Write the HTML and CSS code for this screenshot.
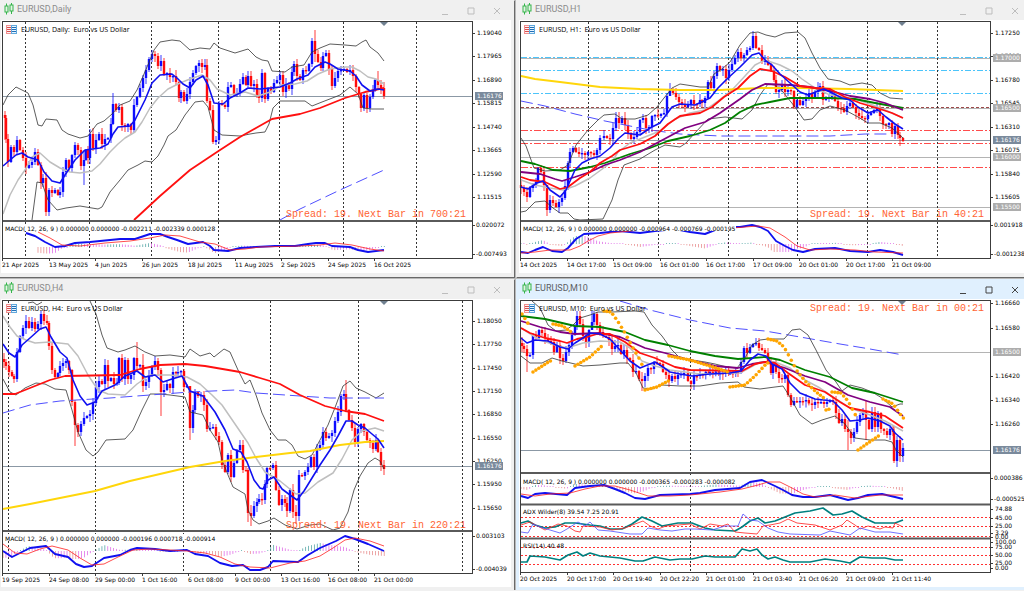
FILE: index.html
```html
<!DOCTYPE html>
<html lang="en">
<head>
    <meta charset="utf-8">
    <title>EURUSD charts</title>
    <meta name="viewport" content="width=device-width, initial-scale=1">
    <link rel="stylesheet" href="styles.css">
</head>
<body>
    <main class="workspace">
        <section class="window">
            <header class="titlebar">
                <svg class="candleIcon" viewBox="0 0 10 12"><path d="M2.5 0.5v11M7.5 0v11"/><rect x="1" y="3" width="3" height="6"/><rect x="6" y="2" width="3" height="6"/></svg>
                <h2>EURUSD,Daily</h2>
                <div class="controls">
                    <button aria-label="Minimize"><svg viewBox="0 0 8 8"><path d="M1 7.5h6"/></svg></button>
                    <button aria-label="Maximize"><svg viewBox="0 0 8 8"><path d="M1 1h6v6h-6z"/></svg></button>
                    <button aria-label="Close"><svg viewBox="0 0 8 8"><path d="M1 1l6 6M7 1l-6 6"/></svg></button>
                </div>
            </header>
            <svg class="chart" id="daily" viewBox="1 20 510 253"></svg>
        </section>

        <section class="window">
            <header class="titlebar">
                <svg class="candleIcon" viewBox="0 0 10 12"><path d="M2.5 0.5v11M7.5 0v11"/><rect x="1" y="3" width="3" height="6"/><rect x="6" y="2" width="3" height="6"/></svg>
                <h2>EURUSD,H1</h2>
                <div class="controls">
                    <button aria-label="Minimize"><svg viewBox="0 0 8 8"><path d="M1 7.5h6"/></svg></button>
                    <button aria-label="Maximize"><svg viewBox="0 0 8 8"><path d="M1 1h6v6h-6z"/></svg></button>
                    <button aria-label="Close"><svg viewBox="0 0 8 8"><path d="M1 1l6 6M7 1l-6 6"/></svg></button>
                </div>
            </header>
            <svg class="chart" id="h1" viewBox="519 20 510 253"></svg>
        </section>

        <section class="window">
            <header class="titlebar">
                <svg class="candleIcon" viewBox="0 0 10 12"><path d="M2.5 0.5v11M7.5 0v11"/><rect x="1" y="3" width="3" height="6"/><rect x="6" y="2" width="3" height="6"/></svg>
                <h2>EURUSD,H4</h2>
                <div class="controls">
                    <button aria-label="Minimize"><svg viewBox="0 0 8 8"><path d="M1 7.5h6"/></svg></button>
                    <button aria-label="Maximize"><svg viewBox="0 0 8 8"><path d="M1 1h6v6h-6z"/></svg></button>
                    <button aria-label="Close"><svg viewBox="0 0 8 8"><path d="M1 1l6 6M7 1l-6 6"/></svg></button>
                </div>
            </header>
            <svg class="chart" id="h4" viewBox="1 299 510 288"></svg>
        </section>

        <section class="window active">
            <header class="titlebar">
                <svg class="candleIcon" viewBox="0 0 10 12"><path d="M2.5 0.5v11M7.5 0v11"/><rect x="1" y="3" width="3" height="6"/><rect x="6" y="2" width="3" height="6"/></svg>
                <h2>EURUSD,M10</h2>
                <div class="controls">
                    <button aria-label="Minimize"><svg viewBox="0 0 8 8"><path d="M1 7.5h6"/></svg></button>
                    <button aria-label="Maximize"><svg viewBox="0 0 8 8"><path d="M1 1h6v6h-6z"/></svg></button>
                    <button aria-label="Close"><svg viewBox="0 0 8 8"><path d="M1 1l6 6M7 1l-6 6"/></svg></button>
                </div>
            </header>
            <svg class="chart" id="m10" viewBox="519 299 510 288"></svg>
        </section>
    </main>

    <script src="charts.js"></script>
</body>
</html>
```

FILE: styles.css
```css
body {
    margin: 0;
    overflow: hidden;
    background: #f0f0f0;
    font-family: "Open Sans", sans-serif;
}
/* the windows run a little past the edges of the desktop */
.workspace {
    display: grid;
    grid-template-columns: 1fr 1fr;
    gap: 2px;
    margin: 0 -8px 0 -2px;
    background: #b8b8b8;
}
.window {
    padding: 0 3px 4px;
    background: #f0f0f0;
    box-shadow: 1px 1px 0 #696969;
}
.window:nth-child(n+3) {
    padding-bottom: 3px;
}
.window.active {
    background: #e0f0fe;
}
.titlebar {
    display: flex;
    align-items: center;
    height: 20px;
    padding-left: 3px;
}
.titlebar h2 {
    flex: 1;
    margin: 0 0 2px 3px;
    font-size: 9px;
    line-height: 14px;
    font-weight: 400;
    font-family: "Roboto", sans-serif;
    color: #8c8c8c;
}
.active .titlebar h2 {
    color: #5c6064;
}
.candleIcon {
    width: 10px;
    height: 12px;
    margin-bottom: 2px;
    fill: #e4f4e4;
    stroke: #34b44a;
    stroke-width: 1;
}
.controls {
    display: flex;
    margin-right: 1px;
}
.controls button {
    width: 26px;
    height: 20px;
    padding: 1px 0 0;
    border: 0;
    background: none;
    line-height: 0;
}
.controls svg {
    width: 8px;
    height: 8px;
    fill: none;
    stroke: #bdbdbd;
}
.active .controls svg {
    stroke: #444;
}

.chart {
    display: block;
    width: 100%;
    height: auto;
    background: white;
}
.chart text {
    font-family: "DejaVu Sans", sans-serif;
    font-size: 6px;
    fill: #000;
    white-space: pre;
}
.chart text.symbol {
    font-family: "Open Sans", sans-serif;
    font-size: 7px;
}
.chart text.spread {
    font-family: "Liberation Mono", monospace;
    font-size: 10px;
    fill: #ff6433;
    text-anchor: end;
}
.chart text.onTag {
    fill: white;
}
.chart polyline {
    fill: none;
    stroke-linejoin: round;
}
.frame {
    fill: none;
    stroke: #3c3c3c;
    shape-rendering: crispEdges;
}
.splitter {
    stroke: #5a5a5a;
    stroke-width: 2;
}
.grid {
    stroke: #333;
    stroke-dasharray: 2 2;
}
.tick {
    stroke: #3c3c3c;
}
.price, .level { stroke: #8b98a5; }
.level { stroke: #b4b4b4; }
.tag { fill: #adadad; }
.tag.current { fill: #7a8a9c; }
.marker { fill: #708090; }
.cyan { stroke: #4cc4fa; stroke-dasharray: 6 2 2 2; }
.redDash { stroke: #ff4c4c; stroke-dasharray: 7 2 2 2; }
.maroon { stroke: #9c4848; stroke-dasharray: 3 2; }
.osc { stroke: #ff3030; stroke-dasharray: 2 2; }

.up { fill: #0c0cff; }
.down { fill: #ff0c0c; }
.band { stroke: #333; stroke-width: 0.8; }
.mid { stroke: #bfbfbf; stroke-width: 1.5; }
.fast { stroke: #1010f0; stroke-width: 1.6; }
.slow { stroke: #ff1010; stroke-width: 1.8; }
.purple { stroke: #800080; stroke-width: 1.8; }
.green { stroke: #008000; stroke-width: 1.8; }
.gold { stroke: #ffd60a; stroke-width: 1.9; }
.far { stroke: #5050ff; stroke-width: 1; stroke-dasharray: 12 5; }
.macd { stroke: #1010f0; stroke-width: 1.9; }
.signal { stroke: #ff2020; stroke-width: 0.8; }
.thinBlue { stroke: #5050ff; stroke-width: 0.8; }
.teal { stroke: #008080; stroke-width: 1.7; }
.sar { fill: #ffa500; }
.textBack { fill: white; }
```

FILE: charts.js
```js
// points are "x,y x,y ..." in the units of each chart's viewBox
const charts = [
{
    id: "daily", left: 3, top: 22, bottom: 220, last: 384,
    title: "EURUSD, Daily:  Euro vs US Dollar",
    spread: ["Spread: 19. Next Bar in 700:21", 217],
    prices: [["1.19040",33],["1.17965",56],["1.16890",80],["1.15815",103],["1.14740",127],["1.13665",150],["1.12590",174],["1.11515",197]],
    current: 96,
    grid: [25,89,151,218,279,343,416],
    times: ["21 Apr 2025","13 May 2025","4 Jun 2025","26 Jun 2025","18 Jul 2025","11 Aug 2025","2 Sep 2025","24 Sep 2025","16 Oct 2025"],
    closes: "5,118 6,139 8,162 11,147 14,152 17,140 20,150 23,158 26,168 29,165 32,162 35,152 38,165 41,183 43,178 46,212 49,190 52,193 55,190 58,195 60,192 63,172 66,160 69,168 72,155 75,145 78,150 81,166 84,160 86,150 88,158 90,134 93,148 96,140 99,134 102,144 105,139 108,138 111,124 113,104 116,110 119,107 122,125 125,127 128,124 131,130 134,105 137,97 140,88 143,78 146,70 149,59 152,54 155,56 158,66 161,61 164,75 167,73 170,77 173,76 176,82 179,98 181,92 184,101 187,94 190,82 193,73 196,66 199,63 202,67 205,65 207,101 210,110 213,142 216,140 219,103 222,105 225,107 228,87 231,85 234,95 237,93 240,84 243,77 246,85 248,76 251,86 254,84 257,96 259,98 262,73 265,99 268,88 271,92 274,83 277,80 280,75 283,92 286,84 289,89 292,72 294,64 297,76 300,80 303,70 306,71 309,64 312,41 315,54 318,62 321,68 323,56 326,53 329,69 332,86 335,78 338,71 341,70 344,69 347,72 350,70 353,76 356,87 359,94 361,108 364,95 367,108 370,97 373,91 375,80 378,85 381,88 384,96",
    wicks: [[315,30,62],[152,50,62],[46,172,216],[84,150,185],[213,105,144],[378,71,88],[113,93,125],[5,111,140]],
    lines: [
        ["band","3,105 8,95 16,87 22,90 28,93 33,105 38,125 42,126 46,119 57,120 62,130 68,134 80,138 88,136 97,124 104,121 112,114 120,105 130,101 137,90 144,74 150,60 154,50 160,42 172,40 180,41 190,50 200,48 210,49 214,43 220,48 235,53 248,49 256,57 262,60 268,61 272,71 285,72 292,67 304,65 312,52 320,48 330,44 345,45 356,46 362,42 366,40 370,47 378,53 384,61"],
        ["band","32,220 37,182 42,183 48,200 57,210 66,208 80,206 98,209 102,207 110,192 120,180 128,170 138,165 145,161 152,162 158,156 164,145 168,136 176,130 185,115 195,102 203,101 208,107 214,130 222,135 240,136 250,134 256,133 265,132 269,124 273,108 280,101 305,101 312,106 322,102 335,97 340,95 350,87 358,94 363,108 372,109 384,109"],
        ["mid","3,214 10,195 18,180 25,170 32,157 40,153 50,162 60,168 70,172 80,173 92,171 100,164 110,152 118,144 125,138 135,132 142,122 150,108 158,98 168,89 180,83 190,79 202,75 210,80 217,89 230,95 245,92 258,96 270,92 282,85 295,84 307,81 318,74 330,69 345,67 352,67 360,71 368,77 376,79 384,84"],
        ["far","280,220 300,209 340,190 384,170"],
        ["slow","134,220 160,196 190,170 217,152 240,137 256,128 272,119 300,114 320,108 345,98 365,92 384,88"],
        ["fast","3,166 10,160 16,155 22,153 28,157 38,160 44,172 52,181 60,183 65,175 75,160 85,150 100,148 108,144 113,134 118,127 130,126 135,120 145,100 152,83 160,75 172,74 177,78 183,84 190,88 196,80 203,76 208,85 214,103 223,104 230,98 240,93 248,88 260,89 270,88 280,87 290,83 297,79 308,75 315,67 325,62 330,64 338,69 350,71 356,76 362,85 370,91 378,89 384,90"]
    ],
    macd: {
        top: 222, bottom: 258, zero: 247, text: "MACD( 12, 26, 9 ) 0.000000 0.000000 -0.002211 -0.002339 0.000128",
        scale: [["0.020072",225],["-0.007493",254]],
        main: "26,233 35,236 45,242 55,247 65,246 75,243 90,242 110,240 120,239 135,239 150,234 160,234 168,237 177,240 188,244 203,242 210,246 214,250 228,251 240,248 256,247 275,246 295,246 308,244 316,243 325,243 332,246 350,247 358,250 368,252 384,250",
        signal: "38,232 50,238 62,245 80,246 105,243 130,241 150,238 165,235 180,236 200,242 215,244 230,250 245,249 260,247 300,246 320,245 335,243 352,245 370,249 384,251"
    }
},
{
    id: "h1", left: 521, top: 22, bottom: 220, last: 902,
    title: "EURUSD, H1:  Euro vs US Dollar",
    spread: ["Spread: 19. Next Bar in 40:21", 217],
    prices: [["1.17250",33],["1.17015",56],["1.16780",80],["1.16545",103],["1.16310",127],["1.16075",150],["1.15840",174],["1.15605",197]],
    tags: [["1.17000",58],["1.16500",108],["1.16000",157],["1.15500",207]],
    current: 140,
    grid: [588,658,728,797,867,937],
    levels: [["cyan",57],["cyan",70],["cyan",93],["maroon",107],["redDash",130],["redDash",143],["redDash",167]],
    times: ["14 Oct 2025","14 Oct 17:00","15 Oct 09:00","16 Oct 01:00","16 Oct 17:00","17 Oct 09:00","20 Oct 01:00","20 Oct 17:00","21 Oct 09:00"],
    closes: "521,188 524,192 527,197 530,188 533,185 536,182 538,168 541,172 544,185 547,210 550,200 553,203 556,207 559,202 562,198 565,186 568,163 570,152 573,148 576,152 579,154 582,153 585,155 588,152 591,153 594,155 597,150 600,138 604,136 607,138 610,139 613,128 616,118 619,123 622,118 625,125 628,133 631,139 634,137 637,132 640,120 643,118 646,128 649,127 652,116 655,115 658,116 661,114 664,113 667,96 670,90 673,93 676,97 679,102 682,105 685,107 688,104 691,100 694,104 697,104 700,100 702,103 705,98 708,82 711,88 714,76 717,66 720,70 723,69 726,78 729,70 732,64 735,58 738,52 741,58 744,55 747,50 750,48 753,36 756,48 759,50 762,62 765,60 768,65 771,71 774,80 776,92 779,90 782,85 785,92 788,90 791,91 794,107 797,100 800,105 803,101 806,97 809,93 812,97 815,92 818,88 820,86 823,100 826,98 829,97 832,95 835,101 838,108 841,108 844,112 847,106 850,103 853,107 856,113 859,116 862,118 865,119 868,115 871,113 874,110 877,107 880,116 883,124 886,125 889,123 892,134 895,126 898,135 900,138 903,141",
    wicks: [[547,185,216],[900,132,146],[753,31,50],[670,83,96],[537,160,186]],
    lines: [
        ["far","521,101 545,106 575,114 605,121 650,130 680,134 720,136 770,136 830,136 865,134 890,134"],
        ["band","521,138 526,146 534,168 545,171 560,170 568,165 576,145 588,130 598,120 604,115 615,114 622,119 635,119 648,115 657,107 664,98 672,88 680,84 700,87 708,87 714,74 722,69 730,62 740,45 750,33 758,32 766,35 775,37 785,33 798,32 805,38 812,53 820,68 828,79 840,81 850,85 862,83 872,85 880,93 890,98 903,99"],
        ["band","521,212 526,211 535,202 545,201 553,208 560,213 568,213 574,219 580,220 603,219 612,200 618,180 624,165 640,159 655,150 665,145 680,147 686,143 694,134 708,119 725,117 742,119 752,110 760,95 768,84 775,85 783,92 795,107 804,120 812,119 820,110 830,106 845,110 858,117 868,123 880,123 892,128 903,138"],
        ["mid","521,180 535,185 550,188 563,190 575,186 590,178 605,167 612,162 618,152 630,143 645,137 660,131 675,119 690,113 705,110 718,101 732,90 745,76 755,65 765,60 780,65 792,71 802,79 815,88 830,95 845,97 858,100 870,104 885,110 903,118"],
        ["gold","521,76 535,79 560,82 600,87 640,89 680,90 720,90 760,88 800,88 850,89 903,91"],
        ["green","521,161 535,164 553,170 570,171 590,167 605,163 630,154 650,148 668,141 690,136 710,130 725,123 740,112 755,105 770,102 790,98 830,98 855,99 875,103 903,108"],
        ["purple","521,172 540,174 555,179 562,181 575,177 590,172 605,165 620,160 640,152 655,144 670,136 685,128 705,122 720,113 740,99 752,90 765,84 790,85 810,87 835,92 850,96 870,99 885,103 903,110"],
        ["slow","521,177 530,180 545,182 560,189 568,187 580,178 590,172 600,163 612,156 620,150 640,144 655,136 668,124 680,116 700,113 712,107 724,97 738,88 750,76 760,69 772,71 785,77 800,86 815,88 830,89 845,97 860,103 870,106 880,109 892,113 903,118"],
        ["fast","521,187 528,189 537,183 543,181 550,190 560,197 566,190 575,170 582,163 590,159 600,156 610,148 618,139 625,133 640,135 650,128 660,123 672,107 680,104 695,105 710,98 718,88 728,78 740,67 752,55 759,53 766,61 772,65 780,74 790,83 800,92 808,95 818,91 824,89 832,93 842,98 850,100 858,107 868,113 878,110 886,117 895,124 903,129"]
    ],
    macd: {
        top: 222, bottom: 258, zero: 244, text: "MACD( 12, 26, 9 ) 0.000000 0.000000 -0.000964 -0.000769 -0.000195",
        scale: [["0.001918",225],["-0.001238",254]],
        main: "521,252 528,253 535,250 543,247 552,251 562,252 568,248 576,239 584,234 600,233 620,231 640,233 655,231 675,229 690,232 705,234 715,230 725,227 740,227 752,225 760,227 768,231 776,241 785,246 793,250 803,252 815,249 835,248 850,251 868,252 880,250 893,252 903,255",
        signal: "521,253 535,252 550,250 570,250 580,246 588,241 598,236 610,233 640,230 690,230 720,229 745,227 758,226 770,228 785,237 797,246 810,250 830,249 855,250 875,252 903,253"
    }
},
{
    id: "h4", left: 3, top: 301, bottom: 530, last: 384,
    title: "EURUSD, H4:  Euro vs US Dollar",
    spread: ["Spread: 19. Next Bar in 220:21", 528],
    prices: [["1.18050",321],["1.17750",344],["1.17450",368],["1.17150",391],["1.16850",414],["1.16550",438],["1.16250",461],["1.15950",484],["1.15650",508]],
    current: 466,
    grid: [8,95,183,270,358,462],
    times: ["19 Sep 2025","24 Sep 08:00","29 Sep 00:00","1 Oct 16:00","6 Oct 08:00","9 Oct 00:00","13 Oct 16:00","16 Oct 08:00","21 Oct 00:00"],
    closes: "4,362 6,366 9,372 12,376 14,379 17,352 20,336 23,328 26,321 29,328 32,322 35,329 38,324 41,314 44,321 47,323 49,346 52,370 55,377 58,373 60,366 63,363 66,361 69,370 72,402 75,425 78,432 81,424 84,418 87,416 90,414 93,403 96,387 99,381 102,384 105,365 108,381 111,378 114,384 117,383 119,358 122,379 125,360 128,379 131,375 134,358 137,366 140,365 143,386 146,382 149,375 152,367 155,361 158,370 161,392 164,390 167,384 170,388 173,372 176,373 178,372 181,371 184,387 187,386 190,428 193,410 195,392 198,396 201,395 204,405 207,429 210,428 213,427 216,436 219,442 222,465 225,472 228,455 231,477 234,463 237,450 240,445 243,470 246,470 248,513 251,516 254,506 257,502 259,499 262,500 265,484 267,468 270,468 273,465 276,490 279,505 282,499 285,503 287,511 290,490 293,512 296,516 299,475 302,476 305,472 308,467 311,457 314,467 317,450 320,445 323,432 326,438 329,436 332,433 335,421 338,412 341,396 344,394 346,410 349,420 352,428 355,442 358,429 361,424 364,432 367,440 370,443 373,449 376,440 378,452 381,465 384,469",
    wicks: [[346,380,412],[161,368,416],[137,342,372],[190,386,440],[248,468,522],[296,505,524],[75,400,446],[143,354,392],[251,505,526]],
    lines: [
        ["band","28,303 33,302 37,305 42,302"],
        ["band","90,301 96,314 102,335 107,348 118,352 125,350 135,346 145,352 155,356 170,355 185,357 190,349 200,356 210,353 214,357 224,349 230,352 238,370 245,384 250,380 256,395 262,413 270,430 278,440 286,440 292,445 298,456 305,459 312,455 320,440 328,425 336,405 343,386 350,381 356,388 365,392 376,398 384,393"],
        ["band","3,379 10,392 16,395 25,388 36,383 45,384 55,389 66,390 72,410 78,432 86,450 93,456 98,452 106,440 125,439 133,430 142,410 150,394 160,394 170,395 185,397 190,412 203,415 210,430 218,442 222,460 228,475 233,487 245,494 248,510 253,520 259,524 268,521 274,518 285,525 297,529 310,525 320,524 333,530 340,528 348,512 354,490 360,476 368,463 375,458 380,461 384,469"],
        ["mid","3,316 10,327 17,336 26,340 35,343 50,342 68,344 78,356 88,375 98,390 108,394 125,395 137,384 150,375 170,375 187,377 200,384 212,395 222,405 235,424 248,443 256,458 265,472 280,481 296,494 305,493 318,482 333,473 342,459 352,440 362,431 375,428 384,431"],
        ["far","3,413 30,405 60,401 110,398 150,395 190,392 235,390 256,393 300,396 330,398 384,398"],
        ["gold","3,509 30,504 60,498 95,491 130,481 160,474 190,467 225,461 256,457 290,453 310,451 340,445 365,442 384,441"],
        ["slow","3,394 15,394 30,388 50,380 65,376 120,375 140,369 160,365 185,364 205,366 240,372 260,378 280,384 300,395 325,406 345,411 365,414 384,421"],
        ["fast","3,344 9,353 15,357 22,345 30,338 40,329 46,327 51,337 60,352 67,358 73,380 80,396 87,405 95,402 102,391 115,385 125,376 137,371 145,377 155,375 163,382 172,379 182,376 190,391 203,396 215,412 225,430 233,449 241,452 247,462 254,480 260,488 263,489 268,480 274,477 282,489 290,495 297,500 304,491 312,478 320,465 330,450 338,436 346,421 352,421 358,425 365,428 372,434 378,439 384,448"]
    ],
    macd: {
        top: 532, bottom: 573, zero: 551, text: "MACD( 12, 26, 9 ) 0.000000 0.000000 -0.000196 0.000718 -0.000914",
        scale: [["0.003103",536],["-0.004039",569]],
        main: "3,551 12,557 20,553 30,548 46,546 55,554 68,557 76,564 84,567 92,566 104,558 120,555 130,550 137,548 155,549 170,551 187,550 195,554 208,556 220,563 232,566 243,565 250,570 260,570 268,567 273,561 298,562 308,555 320,548 336,541 345,536 355,539 368,544 384,551",
        signal: "3,544 15,553 27,554 40,549 52,546 68,550 80,558 92,565 104,564 118,557 133,550 150,549 170,550 187,551 205,553 220,557 235,564 250,567 270,568 290,563 305,561 320,556 333,548 345,540 355,538 370,541 384,546"
    }
},
{
    id: "m10", left: 521, top: 301, bottom: 472, last: 902,
    title: "EURUSD, M10:  Euro vs US Dollar",
    spread: ["Spread: 19. Next Bar in 00:21", 311],
    prices: [["1.16660",303],["1.16580",328],["1.16420",376],["1.16340",400],["1.16260",424]],
    tags: [["1.16500",352]],
    current: 450,
    grid: [690],
    times: ["20 Oct 2025","20 Oct 17:00","20 Oct 19:40","20 Oct 22:20","21 Oct 01:00","21 Oct 03:40","21 Oct 06:20","21 Oct 09:00","21 Oct 11:40"],
    closes: "522,346 524,349 527,356 530,355 533,335 536,338 539,330 542,333 545,338 548,341 551,342 554,352 557,345 560,358 563,361 566,352 569,345 572,335 575,326 577,316 580,324 583,336 586,343 589,330 592,322 594,314 597,325 600,332 603,336 606,337 609,340 612,349 615,346 618,345 621,354 624,350 627,358 630,360 633,372 636,371 639,379 642,381 645,376 648,368 651,369 654,362 657,363 660,364 663,372 666,375 669,381 672,376 675,379 678,375 681,374 684,373 688,381 691,384 694,376 700,374 710,372 720,373 730,373 738,373 741,362 744,348 747,353 750,347 753,344 756,343 759,348 762,350 765,353 768,362 771,373 773,365 776,372 779,378 782,379 785,375 788,395 791,405 794,401 800,401 806,400 812,405 815,402 818,403 821,402 824,404 827,402 830,400 833,402 836,413 839,423 842,419 845,429 848,432 851,438 854,432 857,422 860,415 863,412 866,420 869,429 872,412 875,427 878,413 881,429 884,431 887,435 890,429 893,432 894,461 897,440 900,456 903,448",
    wicks: [[527,345,372],[848,420,450],[642,372,391],[897,436,467],[577,311,330],[592,311,330],[866,400,440]],
    lines: [
        ["far","620,301 650,310 690,320 730,328 765,331 800,337 840,344 870,349 903,355"],
        ["band","532,301 540,308 548,325 556,331 566,330 573,325 580,318 590,315 598,312 612,312 635,311 644,312 652,325 662,336 672,350 680,358 692,360 705,362 715,364 727,367 737,368 745,358 752,345 760,340 768,339 784,339 792,330 800,329 808,335 816,350 826,370 836,382 842,391 850,385 862,388 872,392 882,398 892,407 900,404 903,404"],
        ["band","521,356 530,363 542,363 552,358 562,361 575,364 583,366 600,365 620,363 628,363 636,373 643,388 652,389 662,385 680,386 700,386 720,383 738,382 744,387 760,389 775,387 783,386 790,397 800,415 812,424 822,420 835,416 845,424 855,438 870,440 885,440 892,442 896,450 903,457"],
        ["mid","521,328 540,340 555,345 567,348 583,343 600,341 620,342 630,348 642,361 655,366 670,370 700,374 740,373 760,362 775,362 790,368 805,380 820,388 835,398 850,408 870,415 885,421 903,431"],
        ["green","521,316 545,319 575,326 600,327 625,332 645,340 668,345 690,351 715,356 738,359 765,357 780,360 805,370 830,377 852,388 875,393 903,402"],
        ["purple","521,321 540,327 560,332 575,334 600,333 620,337 645,348 665,353 690,360 715,366 738,368 752,364 765,362 785,368 805,376 825,382 848,395 870,402 890,407 903,416"],
        ["slow","521,328 530,333 545,338 560,341 567,343 577,339 587,337 597,334 610,334 625,342 640,353 655,358 675,367 690,370 742,371 755,364 765,362 775,363 788,373 805,385 825,392 840,402 850,408 870,412 885,416 903,428"],
        ["fast","521,338 527,343 535,340 548,341 560,347 568,349 575,343 583,338 590,333 600,334 610,339 620,350 630,361 640,368 655,362 663,367 670,372 680,374 692,376 710,374 730,373 741,371 750,360 758,354 766,356 772,364 782,369 790,383 800,393 815,399 833,401 842,410 850,421 860,420 868,418 880,421 890,426 895,433 903,440"]
    ],
    sar: ["522,314 529,325","533,372 550,361","553,324 563,326 571,332","575,366 590,357 603,345","604,311 611,312 617,320 625,333 632,346 640,360 643,367","645,390 657,387 668,381","669,356 690,360 710,366 728,372","730,387 745,385 755,376 767,363","768,339 777,341 784,347 789,356 797,371 806,382 815,391 825,399","826,410 830,409","832,392 841,393 848,401 856,416","858,450 868,443 880,435","883,399 893,404 903,418"],
    macd: {
        top: 475, bottom: 503, zero: 487, text: "MACD( 12, 26, 9 ) 0.000000 0.000000 -0.000365 -0.000283 -0.000082",
        scale: [["0.000386",478],["-0.000525",499]],
        main: "521,496 528,498 535,494 545,493 567,495 575,488 590,486 604,485 615,489 625,493 635,498 645,499 660,495 690,494 700,493 715,490 740,488 750,482 762,480 775,486 783,490 792,495 803,497 815,497 830,495 848,500 858,498 868,495 882,494 895,497 903,499",
        signal: "521,494 535,496 550,494 570,493 585,489 600,486 615,486 630,490 648,496 670,496 690,495 720,492 742,489 758,485 768,482 780,482 792,488 803,494 815,497 835,495 855,498 880,495 903,495"
    },
    panels: [
        {
            top: 506, bottom: 537, text: "ADX Wilder(8) 39.54 7.25 20.91", levels: [517,526,536],
            scale: [["74.88",509],["45.00",518],["25.00",526],["3.29",533],["0.00",537]],
            lines: [
                ["teal","521,523 528,521 535,525 545,528 555,527 565,523 575,523 590,525 600,526 610,529 622,529 632,524 642,517 652,521 662,526 678,523 692,523 705,528 715,530 735,531 742,527 750,521 758,518 765,523 775,521 785,517 795,513 810,511 823,508 833,515 842,514 852,511 862,517 875,523 895,523 903,520"],
                ["signal","521,525 530,522 545,530 558,524 567,526 575,531 580,532 583,526 600,527 612,530 625,528 635,524 643,521 650,526 658,529 666,526 678,525 690,524 700,529 710,524 722,526 728,524 735,532 745,533 757,534 763,526 770,525 780,523 788,519 797,523 815,525 830,530 842,525 847,520 855,525 860,529 868,526 880,529 885,527 893,528 895,523 903,527"],
                ["thinBlue","521,532 528,533 533,524 540,527 550,530 560,533 567,529 578,522 585,526 590,522 598,530 610,531 630,534 642,534 648,528 660,530 672,531 685,529 695,529 712,530 725,526 738,526 743,514 750,520 758,521 768,528 778,532 790,534 820,535 830,531 850,535 860,528 875,532 890,532 903,534"]
            ]
        },
        {
            top: 540, bottom: 572, text: "RSI(14) 40.48", levels: [547,555,564],
            scale: [["100.00",542],["75.00",547],["50.00",555],["25.00",563],["0.00",568]],
            lines: [["teal","521,562 527,562 530,556 545,557 560,560 568,555 577,552 583,556 590,553 600,556 620,558 635,561 643,561 655,557 670,560 680,559 692,559 705,556 715,557 735,557 742,549 750,551 757,549 762,555 768,559 775,557 783,560 790,562 810,562 825,559 840,561 850,563 860,557 872,558 885,558 895,560 903,560"]]
        }
    ]
}
];

const STEP = 2.91;
const PLOT_WIDTH = 470;

function parse(points) {
    return points.split(" ").map(p => p.split(",").map(Number));
}

function valueAt(pts, x) {
    for (let i = 1; i < pts.length; i++) {
        if (x <= pts[i][0]) {
            let a = pts[i - 1], b = pts[i];
            return a[1] + (b[1] - a[1]) * (x - a[0]) / (b[0] - a[0]);
        }
    }
    return pts[pts.length - 1][1];
}

function rect(cls, x, y, w, h) {
    return `<rect class="${cls}" x="${x}" y="${y}" width="${w}" height="${h}"/>`;
}
function hline(cls, x, y, w) {
    return `<path class="${cls}" d="M${x} ${y + 0.5}h${w}"/>`;
}
function text(str, x, y, cls = "") {
    return `<text class="${cls}" x="${x}" y="${y}">${str}</text>`;
}
function poly(line) {
    return `<polyline class="${line[0]}" points="${line[1]}"/>`;
}

function drawCandles(c) {
    let pts = parse(c.closes), out = "", prev = pts[0][1] - 3, seed = 7;
    let full = [];
    pts.forEach((p, i) => {
        // fill the quiet stretches where only every third close is stored
        if (i && p[0] - pts[i - 1][0] > 4) {
            for (let x = pts[i - 1][0] + STEP; x < p[0] - 1; x += STEP)
                full.push([x, valueAt(pts, x) + (full.length % 2 ? 1 : -1)]);
        }
        full.push(p);
    });
    full.forEach(([x, close]) => {
        seed = (seed * 73 + 41) % 101;
        let high = Math.min(prev, close) - 1 - seed % 6;
        let low = Math.max(prev, close) + 1 + (seed >> 2) % 6;
        let wick = c.wicks.find(w => w[0] == x);
        if (wick) { high = wick[1]; low = wick[2]; }
        high = Math.max(high, c.top + 1);
        let cls = close < prev ? "up" : "down";
        out += rect(cls, x - 0.4, high, 0.8, low - high);
        out += rect(cls, x - 1.2, Math.min(prev, close), 2.4, Math.max(1.4, Math.abs(close - prev)));
        prev = close;
    });
    return out;
}

function drawMacd(c) {
    let m = c.macd, main = parse(m.main), signal = parse(m.signal), out = "", before = 0;
    for (let x = signal[0][0]; x <= c.last + 1; x += STEP) {
        let h = valueAt(signal, x) - valueAt(main, x);
        let color = h > 0 ? (h > before ? "#5aa8a8" : "#e070e8") : (h < before ? "#e89090" : "#e070e8");
        let size = Math.max(1, Math.min(8, Math.abs(h)));
        out += `<rect x="${x - 0.4}" y="${h > 0 ? m.zero - size : m.zero}" width="0.8" height="${size}" fill="${color}"/>`;
        before = h;
    }
    out += poly(["macd", m.main]) + poly(["signal", m.signal]);
    return out + rect("textBack", c.left + 1, m.top + 2, 214, 7) + text(m.text, c.left + 2, m.top + 9);
}

function drawChart(c) {
    let right = c.left + PLOT_WIDTH, labelX = c.left + 474, out = "";
    let panels = c.panels || [];
    let end = panels.length ? panels[panels.length - 1].bottom : c.macd.bottom;

    (c.tags || []).forEach(t => out += hline("level", c.left, t[1], PLOT_WIDTH));
    out += hline("price", c.left, c.current, PLOT_WIDTH);
    (c.levels || []).forEach(l => out += hline(l[0], c.left, l[1], PLOT_WIDTH));
    c.grid.forEach(x => out += `<path class="grid" d="M${x + 0.5} ${c.top}V${end}"/>`);

    out += drawCandles(c);
    c.lines.forEach(l => out += poly(l));
    (c.sar || []).forEach(s => {
        let pts = parse(s);
        for (let x = pts[0][0]; x <= pts[pts.length - 1][0] + 1; x += STEP)
            out += `<circle class="sar" cx="${x}" cy="${valueAt(pts, x)}" r="1.8"/>`;
    });
    out += `<path class="marker" d="M${c.last - 4} ${c.top}h8l-4 4z"/>`;

    // symbol badge
    let bx = c.left + 3, by = c.top + 3;
    out += `<rect x="${bx + 0.5}" y="${by + 0.5}" width="5" height="8" fill="#fff0f0" stroke="#f09090"/>`;
    out += `<rect x="${bx + 5.5}" y="${by + 0.5}" width="5" height="8" fill="#e8f4ff" stroke="#60a8dc"/>`;
    out += `<path d="M${bx + 1} ${by + 2.5}h4m-4 2h4m-4 2h4" stroke="#d85050"/>`;
    out += `<path d="M${bx + 6} ${by + 2.5}h4m-4 2h4m-4 2h4" stroke="#2070b8"/>`;
    out += text(c.title, c.left + 18, c.top + 10, "symbol");
    out += text(c.spread[0], c.left + 463, c.spread[1], "spread");

    out += drawMacd(c);
    out += hline("splitter", c.left, c.bottom + 0.5, PLOT_WIDTH);
    let scale = c.prices.concat(c.macd.scale);
    panels.forEach(p => {
        out += hline("splitter", c.left, p.top - 2, PLOT_WIDTH);
        p.levels.forEach(y => out += hline("osc", c.left, y, PLOT_WIDTH));
        p.lines.forEach(l => out += poly(l));
        out += text(p.text, c.left + 2, p.top + 8);
        scale = scale.concat(p.scale);
    });

    out += rect("frame", c.left - 0.5, c.top - 0.5, PLOT_WIDTH, end - c.top + 1);
    scale.forEach(p => {
        out += `<path class="tick" d="M${right} ${p[1] + 0.5}h2"/>`;
        out += text(p[0], labelX - (p[0].length > 7 ? 1 : 0), p[1] + 2);
    });
    (c.tags || []).forEach(t => out += rect("tag", right + 2, t[1] - 4, 28, 8) + text(t[0], labelX, t[1] + 2, "onTag"));
    out += rect("tag current", right + 2, c.current - 4, 28, 8) + text("1.16176", labelX, c.current + 2, "onTag");

    c.times.forEach((t, i) => {
        let x = Math.round(c.left + i * STEP * 16);
        out += `<path class="tick" d="M${x - 0.5} ${end}v3"/>` + text(t, x - 1, end + 9);
    });
    document.getElementById(c.id).innerHTML = out;
}

charts.forEach(drawChart);
```
